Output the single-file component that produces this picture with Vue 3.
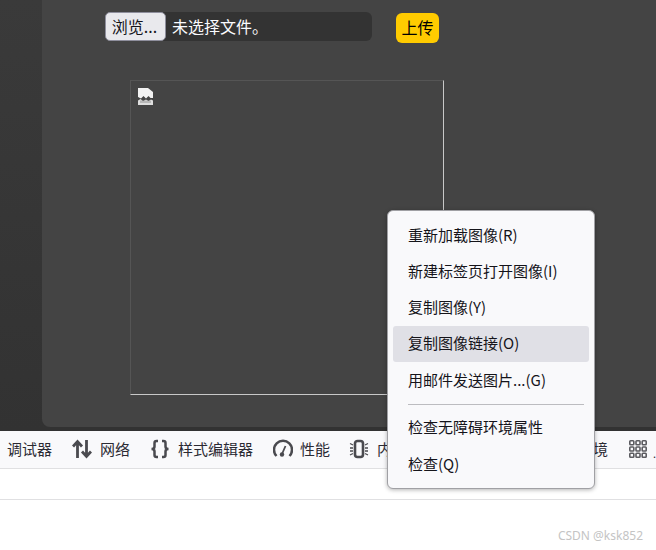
<script setup>
const tools = [
  { label: '调试器' },
  { label: '网络', icon: 'net' },
  { label: '样式编辑器', icon: 'braces' },
  { label: '性能', icon: 'gauge', cls: 'tight' },
  { label: '内存', icon: 'chip', cls: 'pull' },
  { label: '存储', icon: 'store' },
  { label: '无障碍环境', icon: 'access' },
  { label: '', icon: 'grid', cls: 'push' },
  { label: '.', cls: 'more' }
]
const menu = [
  { label: '重新加载图像(R)', cls: 'h36 up' },
  { label: '新建标签页打开图像(I)', cls: 'h36 up' },
  { label: '复制图像(Y)', cls: 'h36 up' },
  { label: '复制图像链接(O)', cls: 'h36 up active' },
  { label: '用邮件发送图片...(G)', cls: 'h38 up' },
  { sep: true },
  { label: '检查无障碍环境属性', cls: 'h36' },
  { label: '检查(Q)', cls: 'h38' }
]
</script>

<template>
  <div class="page">
    <div class="top">
      <div class="panel">
        <div class="upload-row">
          <div class="file">
            <button class="browse"><span class="nudge-small">浏览...</span></button>
            <span class="file-name"><span class="nudge-small">未选择文件。</span></span>
          </div>
          <button class="upload"><span class="nudge">上传</span></button>
        </div>
        <div class="img-box">
          <svg class="broken" width="16" height="18" viewBox="0 0 16 18">
            <path d="M0 0H10L15 4V10H12.500L10.500 8L8 10.500L5.500 8L3 10.500L0 9Z" fill="#f2f2f2" />
            <path d="M0 12.500L2.500 11L5 13L8 11.500L10.500 13L13 11.500L15 12.500V17H0Z" fill="#dedede" />
            <path d="M2 12.500V15H13V12.500" fill="#8a8a8a" opacity="0.450" />
          </svg>
        </div>
      </div>
    </div>

    <div class="toolbar">
      <div v-for="(t, i) in tools" :key="i" class="tool" :class="t.cls">
        <svg v-if="t.icon === 'net'" width="20" height="20" viewBox="0 0 20 20" fill="none" stroke="#4a4a4f" stroke-width="2.800">
          <path d="M5.500 19V3M1 7.500L5.500 2.500L10 7.500" />
          <path d="M14.500 1V17M10 12.500L14.500 17.500L19 12.500" />
        </svg>
        <svg v-else-if="t.icon === 'braces'" width="20" height="20" viewBox="0 0 20 20" fill="none" stroke="#4a4a4f" stroke-width="2.500">
          <path d="M8 2H6.500Q4.500 2 4.500 4V7.500Q4.500 10 1.500 10Q4.500 10 4.500 12.500V16Q4.500 18 6.500 18H8" />
          <path d="M12 2H13.500Q15.500 2 15.500 4V7.500Q15.500 10 18.500 10Q15.500 10 15.500 12.500V16Q15.500 18 13.500 18H12" />
        </svg>
        <svg v-else-if="t.icon === 'gauge'" width="20" height="20" viewBox="0 0 20 20" fill="none" stroke="#4a4a4f" stroke-width="2.500">
          <path d="M3.500 17A9 9 0 1 1 16.500 17" />
          <circle cx="9" cy="15.500" r="2.200" fill="#4a4a4f" stroke="none" />
          <path d="M9 15L12.500 7" stroke-width="1.800" />
        </svg>
        <svg v-else-if="t.icon === 'chip'" width="20" height="20" viewBox="0 0 20 20" fill="none" stroke="#4a4a4f">
          <rect x="6" y="2" width="8" height="16" rx="2.500" stroke-width="2.600" />
          <path d="M1 4.500L4 6M1 9H4M1 12H4M1 16L4 14.500M19 4.500L16 6M19 9H16M19 12H16M19 16L16 14.500" stroke-width="1.300" />
        </svg>
        <svg v-else-if="t.icon === 'store'" width="20" height="20" viewBox="0 0 20 20" fill="none" stroke="#4a4a4f" stroke-width="2">
          <rect x="2" y="3" width="16" height="14" rx="2" />
        </svg>
        <svg v-else-if="t.icon === 'access'" width="20" height="20" viewBox="0 0 20 20" fill="none" stroke="#4a4a4f" stroke-width="2">
          <circle cx="10" cy="10" r="8" />
        </svg>
        <svg v-else-if="t.icon === 'grid'" width="18" height="18" viewBox="0 0 18 18" fill="none" stroke="#5b5b60" stroke-width="1.600">
          <rect x="0.800" y="0.800" width="4" height="4" rx="0.800" />
          <rect x="7" y="0.800" width="4" height="4" rx="0.800" />
          <rect x="13.200" y="0.800" width="4" height="4" rx="0.800" />
          <rect x="0.800" y="7" width="4" height="4" rx="0.800" />
          <rect x="7" y="7" width="4" height="4" rx="0.800" />
          <rect x="13.200" y="7" width="4" height="4" rx="0.800" />
          <rect x="0.800" y="13.200" width="4" height="4" rx="0.800" />
          <rect x="7" y="13.200" width="4" height="4" rx="0.800" />
          <rect x="13.200" y="13.200" width="4" height="4" rx="0.800" />
        </svg>
        <span v-if="t.label" class="nudge">{{ t.label }}</span>
      </div>
    </div>
    <div class="row"></div>

    <div class="menu">
      <template v-for="(m, i) in menu" :key="i">
        <div v-if="m.sep" class="sep"></div>
        <div v-else class="item" :class="m.cls"><span class="nudge">{{ m.label }}</span></div>
      </template>
    </div>

    <div class="watermark">CSDN @ksk852</div>
  </div>
</template>

<style scoped>
.page {
  position: relative;
  width: 656px;
  height: 550px;
  overflow: hidden;
  background: #fff;
  font-family: "Noto Sans CJK SC", "Noto Sans", sans-serif;
}
.nudge {
  display: block;
  transform: translateY(-1.500px);
}
.nudge-small {
  display: block;
  transform: translateY(-0.500px);
}
.up .nudge {
  transform: translateY(-2.500px);
}
.top {
  height: 431px;
  background: linear-gradient(#3a3a3a, #323232);
}
.panel {
  box-sizing: border-box;
  margin-left: 42px;
  height: 427px;
  padding: 12px 0 0 63px;
  background: #444;
  border-bottom-left-radius: 8px;
}
.upload-row {
  display: flex;
  align-items: flex-start;
  gap: 24px;
}
.file {
  display: flex;
  align-items: center;
  width: 267px;
  height: 29px;
  background: #333;
  border-radius: 6px;
}
.browse {
  box-sizing: border-box;
  width: 61px;
  height: 29px;
  padding: 0 2px 0 0;
  font: 16px/27px "Noto Sans CJK SC", sans-serif;
  color: #15141a;
  background: #e9e9ed;
  border: 1px solid #8f8f9d;
  border-radius: 5px;
}
.file-name {
  margin-left: 6px;
  font-size: 16px;
  line-height: 29px;
  color: #fbfbfe;
}
.upload {
  box-sizing: border-box;
  width: 43px;
  height: 30px;
  margin-top: 1px;
  padding: 0;
  font: 16px/30px "Noto Sans CJK SC", sans-serif;
  color: #000;
  background: #ffcb00;
  border: 0;
  border-radius: 6px;
}
.img-box {
  box-sizing: border-box;
  width: 314px;
  height: 315px;
  margin-top: 37px;
  margin-left: 25px;
  padding: 7px 0 0 7px;
  border-style: solid;
  border-width: 1px;
  border-color: #555 #c8c8c8 #c8c8c8 #555;
}
.broken {
  display: block;
}
.toolbar {
  box-sizing: border-box;
  display: flex;
  align-items: center;
  gap: 20px;
  height: 38px;
  padding-left: 7px;
  overflow: hidden;
  background: #f9f9fb;
  border-bottom: 1px solid #e0e0e2;
}
.tool {
  display: flex;
  flex: none;
  align-items: center;
  gap: 8px;
  font-size: 15px;
  line-height: 20px;
  color: #2b2a33;
}
.tool svg {
  margin-top: -1px;
}
.tight {
  gap: 7px;
}
.pull {
  margin-left: -1px;
}
.push {
  margin-left: 1px;
}
.more {
  margin-left: -14px;
  font-size: 11px;
}
.more .nudge {
  transform: translateY(3px);
}
.row {
  box-sizing: border-box;
  height: 31px;
  border-bottom: 1px solid #e0e0e2;
}
.menu {
  box-sizing: border-box;
  position: absolute;
  left: 387px;
  top: 210px;
  width: 208px;
  height: 279px;
  padding: 7px 5px 0;
  background: #f9f9fb;
  border: 1px solid #a0a0a4;
  border-radius: 6px;
  box-shadow: 0 1px 4px rgba(0, 0, 0, 0.3);
}
.item {
  box-sizing: border-box;
  display: flex;
  align-items: center;
  padding-left: 15px;
  font-size: 15px;
  color: #15141a;
  white-space: nowrap;
  border-radius: 3px;
}
.h36 {
  height: 36px;
}
.h38 {
  height: 38px;
}
.active {
  background: #e0e0e6;
}
.sep {
  height: 1px;
  margin: 4px 5px 4px 15px;
  background: #bcbcc0;
}
.watermark {
  position: absolute;
  right: 13px;
  bottom: 6px;
  font-family: "Noto Sans", sans-serif;
  font-size: 12px;
  line-height: 16px;
  color: #c4c4c4;
}
</style>
